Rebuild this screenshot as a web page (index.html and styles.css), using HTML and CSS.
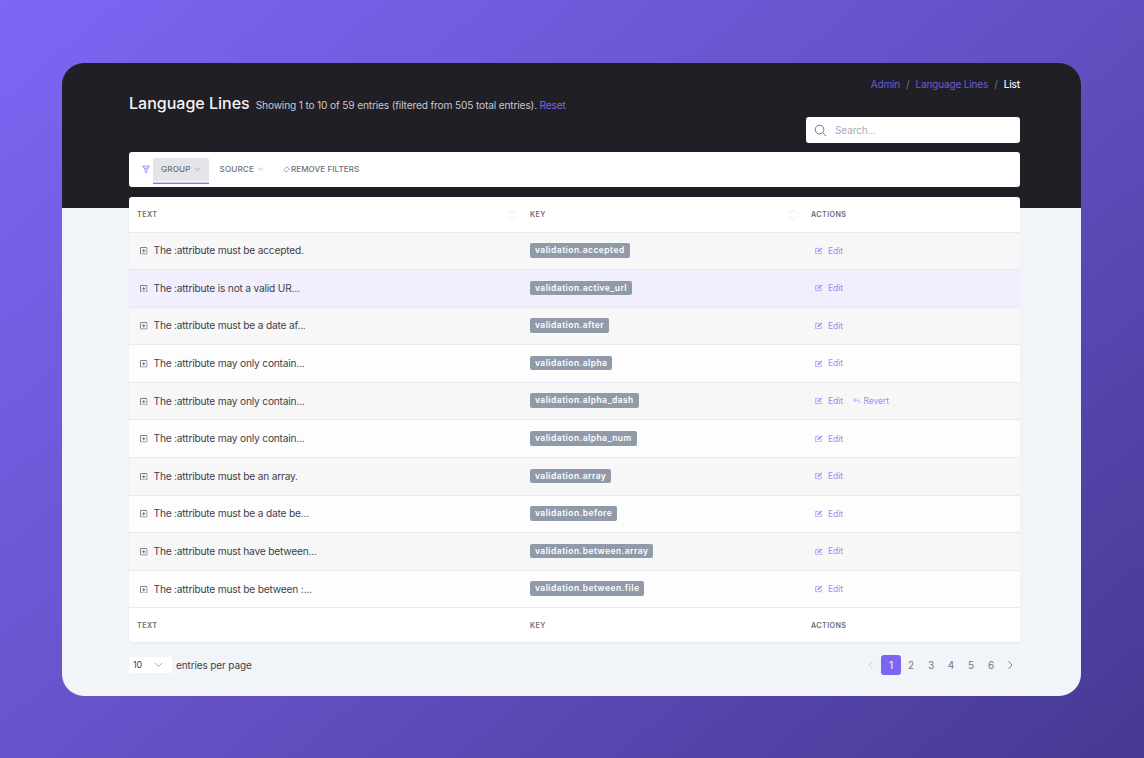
FILE: index.html
```html
<!DOCTYPE html>
<html lang="en">
<head>
    <meta charset="UTF-8">
    <title>Language Lines</title>
    <link rel="stylesheet" href="styles.css">
</head>
<body>
    <svg class="icon-defs" width="0" height="0">
        <symbol id="i-expand" viewBox="0 0 16 16">
            <rect x="1" y="1" width="14" height="14" rx="1" fill="none" stroke="currentColor" stroke-width="1.6"/>
            <path d="M8 4.500v7M4.500 8h7" fill="none" stroke="currentColor" stroke-width="1.6"/>
        </symbol>
        <symbol id="i-edit" viewBox="0 0 16 16">
            <path d="M8 3H1.500v11.500H13V8" fill="none" stroke="currentColor" stroke-width="1.600"/>
            <path d="M5.500 10.500V8L13 .8l2.200 2.200-7.500 7.500z" fill="currentColor"/>
        </symbol>
        <symbol id="i-revert" viewBox="0 0 16 16">
            <path d="M6 2.500L1.800 6.800 6 11M2.500 6.800H10c2.500 0 4.200 1.700 4.200 4.200v2.500" fill="none" stroke="currentColor" stroke-width="1.500"/>
        </symbol>
        <symbol id="i-chevron" viewBox="0 0 10 6">
            <path d="M1 1l4 4 4-4" fill="none" stroke="currentColor" stroke-width="0.9"/>
        </symbol>
        <symbol id="i-sort" viewBox="0 0 10 16">
            <path d="M1 6L5 2l4 4M1 10l4 4 4-4" fill="none" stroke="currentColor" stroke-width="1"/>
        </symbol>
    </svg>

    <div class="window">
        <header class="top">
            <div class="heading">
                <h1 class="title">Language Lines</h1>
                <span class="subtitle">Showing 1 to 10 of 59 entries (filtered from 505 total entries). <a href="#">Reset</a></span>
            </div>
            <div class="top-right">
                <nav class="crumbs">
                    <a href="#">Admin</a><span class="sep">/</span><a href="#">Language Lines</a><span class="sep">/</span><span class="current">List</span>
                </nav>
                <div class="search">
                    <svg class="search-icon" viewBox="0 0 16 16"><circle cx="6.800" cy="6.800" r="5.300" fill="none" stroke="currentColor" stroke-width="1.200"/><path d="M10.600 10.600l4.400 4.400" stroke="currentColor" stroke-width="1.200"/></svg>
                    <span>Search...</span>
                </div>
            </div>
        </header>

        <div class="filters">
            <svg class="filter-icon" viewBox="0 0 12 12"><path d="M1 1h10L7.300 6.500V11L4.700 9.500v-3zM3 4h6" fill="none" stroke="currentColor" stroke-width="1"/></svg>
            <a class="filter active" href="#">Group <svg class="chev"><use href="#i-chevron"/></svg></a>
            <a class="filter" href="#">Source <svg class="chev"><use href="#i-chevron"/></svg></a>
            <a class="filter remove" href="#"><svg class="eraser" viewBox="0 0 10 10"><path d="M5.500 1L9 4.500 4.500 9 1 5.500z" fill="none" stroke="currentColor" stroke-width="0.900"/></svg>Remove filters</a>
        </div>

        <table class="lines">
            <thead>
                <tr>
                    <th class="col-text">Text<svg class="sort"><use href="#i-sort"/></svg></th>
                    <th class="col-key">Key<svg class="sort"><use href="#i-sort"/></svg></th>
                    <th>Actions</th>
                </tr>
            </thead>
            <tbody id="rows">
                <tr>
                    <td><svg class="expand"><use href="#i-expand"/></svg>The :attribute must be accepted.</td>
                    <td><span class="badge">validation.accepted</span></td>
                    <td><a class="action" href="#"><svg><use href="#i-edit"/></svg>Edit</a></td>
                </tr>
                <tr class="hover">
                    <td><svg class="expand"><use href="#i-expand"/></svg>The :attribute is not a valid UR...</td>
                    <td><span class="badge">validation.active_url</span></td>
                    <td><a class="action" href="#"><svg><use href="#i-edit"/></svg>Edit</a></td>
                </tr>
                <tr>
                    <td><svg class="expand"><use href="#i-expand"/></svg>The :attribute must be a date af...</td>
                    <td><span class="badge">validation.after</span></td>
                    <td><a class="action" href="#"><svg><use href="#i-edit"/></svg>Edit</a></td>
                </tr>
                <tr>
                    <td><svg class="expand"><use href="#i-expand"/></svg>The :attribute may only contain...</td>
                    <td><span class="badge">validation.alpha</span></td>
                    <td><a class="action" href="#"><svg><use href="#i-edit"/></svg>Edit</a></td>
                </tr>
                <tr>
                    <td><svg class="expand"><use href="#i-expand"/></svg>The :attribute may only contain...</td>
                    <td><span class="badge">validation.alpha_dash</span></td>
                    <td><a class="action" href="#"><svg><use href="#i-edit"/></svg>Edit</a><a class="action" href="#"><svg><use href="#i-revert"/></svg>Revert</a></td>
                </tr>
                <tr>
                    <td><svg class="expand"><use href="#i-expand"/></svg>The :attribute may only contain...</td>
                    <td><span class="badge">validation.alpha_num</span></td>
                    <td><a class="action" href="#"><svg><use href="#i-edit"/></svg>Edit</a></td>
                </tr>
                <tr>
                    <td><svg class="expand"><use href="#i-expand"/></svg>The :attribute must be an array.</td>
                    <td><span class="badge">validation.array</span></td>
                    <td><a class="action" href="#"><svg><use href="#i-edit"/></svg>Edit</a></td>
                </tr>
                <tr>
                    <td><svg class="expand"><use href="#i-expand"/></svg>The :attribute must be a date be...</td>
                    <td><span class="badge">validation.before</span></td>
                    <td><a class="action" href="#"><svg><use href="#i-edit"/></svg>Edit</a></td>
                </tr>
                <tr>
                    <td><svg class="expand"><use href="#i-expand"/></svg>The :attribute must have between...</td>
                    <td><span class="badge">validation.between.array</span></td>
                    <td><a class="action" href="#"><svg><use href="#i-edit"/></svg>Edit</a></td>
                </tr>
                <tr>
                    <td><svg class="expand"><use href="#i-expand"/></svg>The :attribute must be between :...</td>
                    <td><span class="badge">validation.between.file</span></td>
                    <td><a class="action" href="#"><svg><use href="#i-edit"/></svg>Edit</a></td>
                </tr>
            </tbody>
            <tfoot>
                <tr>
                    <th>Text</th>
                    <th>Key</th>
                    <th>Actions</th>
                </tr>
            </tfoot>
        </table>

        <div class="table-footer">
            <div class="per-page">
                <div class="select">10<svg class="chev-big"><use href="#i-chevron"/></svg></div>
                <span>entries per page</span>
            </div>
            <div class="pages">
                <a class="page arrow disabled" href="#"><svg viewBox="0 0 8 12"><path d="M6 1.500L1.800 6 6 10.500" fill="none" stroke="currentColor" stroke-width="1.100"/></svg></a>
                <a class="page current" href="#">1</a>
                <a class="page" href="#">2</a>
                <a class="page" href="#">3</a>
                <a class="page" href="#">4</a>
                <a class="page" href="#">5</a>
                <a class="page" href="#">6</a>
                <a class="page arrow" href="#"><svg viewBox="0 0 8 12"><path d="M1 1.500L5.200 6 1 10.500" fill="none" stroke="currentColor" stroke-width="1.100"/></svg></a>
            </div>
        </div>
    </div>
</body>
</html>
```

FILE: styles.css
```css
* {
    margin: 0;
    padding: 0;
    box-sizing: border-box;
}

body {
    font-family: Inter, 'Liberation Sans', sans-serif;
    background: linear-gradient(140deg, #7b67f4 0%, #6551c6 50%, #463992 100%);
    width: 1144px;
    height: 758px;
    overflow: hidden;
    display: flex;
    align-items: center;
    justify-content: center;
    color: #3f3e46;
}

a {
    text-decoration: none;
}

.icon-defs {
    display: block;
    width: 0;
    height: 0;
    overflow: hidden;
    flex: none;
}

.window {
    width: 1019px;
    height: 633px;
    margin-right: 1px;
    padding: 14px 61px 0 67px;
    border-radius: 22px;
    overflow: hidden;
    background: linear-gradient(#211f26 145px, #f1f4f9 145px);
}

.top {
    display: flex;
    justify-content: space-between;
}

.heading {
    display: flex;
    align-items: baseline;
    gap: 6px;
    padding-top: 16px;
}

.title {
    font-size: 16px;
    font-weight: 500;
    color: #f4f4f6;
}

.subtitle {
    font-size: 10.200px;
    letter-spacing: -0.17px;
    color: #c9c8cf;
}

.subtitle a {
    color: #7a66f0;
}

.top-right {
    width: 214px;
}

.crumbs {
    height: 16px;
    font-size: 10px;
    letter-spacing: -0.15px;
    line-height: 16px;
    text-align: right;
    color: #77757f;
    transform: translateY(-1px);
}

.crumbs a {
    color: #6c5bd8;
}

.sep {
    margin: 0 6px;
}

.current {
    color: #f2f2f5;
    font-weight: 500;
}

.search {
    display: flex;
    align-items: center;
    gap: 8px;
    height: 26px;
    margin-top: 24px;
    padding: 1px 0 0 8px;
    background: #fff;
    border-radius: 3px;
    font-size: 10px;
    letter-spacing: -0.1px;
    color: #a6abb6;
}

.search-icon {
    width: 13px;
    height: 13px;
    color: #6f6a80;
}

.filters {
    display: flex;
    align-items: center;
    height: 35px;
    margin-top: 9px;
    padding-left: 13px;
    background: #fff;
    border-radius: 3px;
}

.filter-icon {
    width: 8px;
    height: 9px;
    margin-right: 3px;
    color: #7a66f0;
}

.filter {
    display: flex;
    align-items: center;
    gap: 3px;
    height: 23px;
    padding: 0 8px;
    margin-right: 3px;
    font-size: 8.200px;
    font-weight: 500;
    letter-spacing: 0.1px;
    text-transform: uppercase;
    color: #6f717a;
}

.filter.active {
    background: #e3e5e9;
    border-radius: 2px 2px 0 0;
    box-shadow: 0 1.500px 0 #fff, 0 3px 0 #8a78f2;
}

.filter.remove {
    gap: 1px;
    padding: 0;
    margin-left: 8px;
    font-size: 8px;
}

.chev {
    width: 7px;
    height: 4px;
    color: #8b8d95;
}

.eraser {
    width: 7px;
    height: 7px;
}

.lines {
    width: 891px;
    margin-top: 10px;
    border-collapse: separate;
    border-spacing: 0;
    table-layout: fixed;
    background: #fff;
    border-radius: 3px;
    box-shadow: 0 1px 2px rgba(40, 40, 60, 0.06);
}

.col-text {
    width: 393px;
}

.col-key {
    width: 281px;
}

.lines th {
    position: relative;
    height: 35px;
    padding-left: 8px;
    text-align: left;
    font-size: 7.200px;
    font-weight: 600;
    letter-spacing: 0.4px;
    text-transform: uppercase;
    color: #6c6c74;
}

.sort {
    position: absolute;
    right: 5px;
    top: 11px;
    width: 10px;
    height: 14px;
    color: #e3e4e8;
}

.lines td {
    height: 37.600px;
    padding: 0 0 1px 8px;
    border-top: 1px solid #e9eaee;
    font-size: 10.200px;
    letter-spacing: -0.2px;
    background: #fdfdfe;
    vertical-align: middle;
}

.lines tbody tr:nth-child(odd) td {
    background: #f7f7f8;
}

.lines tbody tr.hover td {
    background: #f1effd;
}

.lines tfoot th {
    height: 34.500px;
    border-top: 1px solid #e9eaee;
}

.expand {
    width: 7.500px;
    height: 7.500px;
    margin: 0 6px 0 3px;
    vertical-align: -0.500px;
    color: #55545c;
}

.badge {
    display: inline-block;
    height: 14.500px;
    padding: 0 5px;
    border-radius: 2px;
    background: #909aa9;
    color: #fff;
    font-size: 8.500px;
    font-weight: 600;
    line-height: 14.500px;
    letter-spacing: 0.45px;
    vertical-align: middle;
}

.action {
    display: inline-flex;
    align-items: center;
    gap: 5.500px;
    margin-left: 4px;
    margin-right: 6px;
    font-size: 8.500px;
    letter-spacing: -0.05px;
    color: #9d8cf5;
}

.action svg {
    width: 7.500px;
    height: 7.500px;
}

.action + .action {
    gap: 3px;
}

.table-footer {
    display: flex;
    justify-content: space-between;
    align-items: center;
    height: 20px;
    margin-top: 13px;
}

.per-page {
    display: flex;
    align-items: center;
    gap: 4px;
    font-size: 10px;
    letter-spacing: -0.12px;
}

.select {
    display: flex;
    align-items: center;
    justify-content: space-between;
    width: 43px;
    height: 16px;
    padding: 0 9px 0 4px;
    background: #fff;
    font-size: 9px;
}

.chev-big {
    width: 9px;
    height: 5.500px;
    color: #8b94a3;
}

.pages {
    display: flex;
    align-items: center;
    margin-right: -1px;
}

.page {
    display: flex;
    align-items: center;
    justify-content: center;
    width: 20px;
    height: 20px;
    border-radius: 3px;
    font-size: 10px;
    color: #77767e;
}

.page.current {
    background: #7a66f0;
    color: #e9e6fd;
}

.arrow svg {
    width: 8px;
    height: 10px;
}

.arrow.disabled {
    color: #c8ccd6;
}
```
